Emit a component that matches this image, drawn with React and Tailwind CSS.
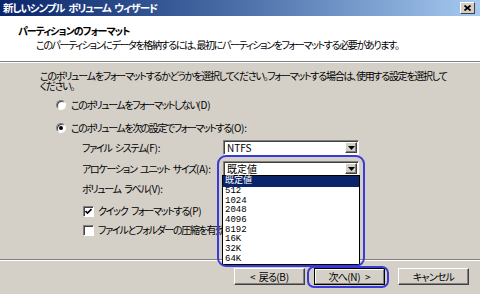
const Tri = () => (
  <svg width="7" height="4" viewBox="0 0 7 4"><path d="M0 0h7L3.5 4z" fill="#000" /></svg>
);

const K = ({ children }) => <span className="tracking-[-0.2px]">{children}</span>;

const DropBtn = () => (
  <div className="w-[12px] h-full flex items-center justify-center bg-[#d4d0c8] border border-t-white border-l-white border-b-[#404040] border-r-[#404040] shadow-[inset_-1px_-1px_#808080]">
    <Tri />
  </div>
);

const Combo = ({ value }) => (
  <div className="w-[136px] h-[15px] flex bg-white border border-t-[#808080] border-l-[#808080] border-b-white border-r-white shadow-[inset_1px_1px_#404040]">
    <div className="flex-1 pl-[3px] pt-[1px] flex items-center tracking-normal">{value}</div>
    <div className="p-[1px] h-full"><DropBtn /></div>
  </div>
);

const Radio = ({ checked }) => (
  <div className="w-[10px] h-[10px] rounded-full bg-white border border-t-[#808080] border-l-[#808080] border-b-white border-r-white flex items-center justify-center shadow-[inset_1px_1px_#404040]">
    {checked && <div className="w-[4px] h-[4px] rounded-full bg-black" />}
  </div>
);

const Check = ({ checked }) => (
  <div className="w-[11px] h-[11px] bg-white border border-t-[#808080] border-l-[#808080] border-b-white border-r-white flex items-center justify-center shadow-[inset_1px_1px_#404040]">
    {checked && (
      <svg width="7" height="7" viewBox="0 0 7 7"><path d="M0.5 3l2 2 4-4" stroke="#000" strokeWidth="1.6" fill="none" /></svg>
    )}
  </div>
);

const Button = ({ children, def }) => (
  <div className={`w-[71px] h-[17px] bg-[#d4d0c8] flex items-center justify-center border ${def ? 'border-black' : 'border-t-white border-l-white border-b-[#404040] border-r-[#404040]'}`}>
    <div className={`w-full h-full flex items-center justify-center tracking-[-0.8px] ${def ? 'border border-t-white border-l-white border-b-[#808080] border-r-[#808080]' : 'shadow-[inset_-1px_-1px_#808080]'}`}>
      {children}
    </div>
  </div>
);

export default function App() {
  const items = ['既定値', '512', '1024', '2048', '4096', '8192', '16K', '32K', '64K'];
  return (
    <div className="relative w-[480px] h-[294px] overflow-hidden bg-[#d4d0c8] text-black font-['Noto_Sans_CJK_JP',sans-serif] text-[10px] tracking-[-1.3px] [word-spacing:2.5px] leading-none [font-feature-settings:'palt'] flex flex-col whitespace-nowrap">
      {/* title bar */}
      <div className="h-[16px] flex items-center justify-between pl-[3px] pr-[5px] bg-gradient-to-r from-[#0a246a] via-[#4c6fa8] to-[#a6caf0]">
        <span className="text-white font-bold text-[10.5px] tracking-[-1.1px]">新しいシンプル ボリューム ウィザード</span>
        <div className="w-[15px] h-[12px] bg-[#d4d0c8] border border-t-white border-l-white border-b-[#404040] border-r-[#404040] flex items-center justify-center">
          <svg width="7" height="6" viewBox="0 0 7 6"><path d="M0.5 0.5l6 5M6.5 0.5l-6 5" stroke="#000" strokeWidth="1.7" /></svg>
        </div>
      </div>

      {/* header */}
      <div className="h-[45px] bg-white pl-[18px] pt-[10px]">
        <div className="font-bold h-[12px] tracking-[-1px]">パーティションのフォーマット</div>
        <div className="pl-[18px] mt-[2px] tracking-[-1.35px]">このパーティションにデータを格納するには、最初にパーティションをフォーマットする必要があります。</div>
      </div>
      <div className="h-px bg-[#808080]" />
      <div className="h-px bg-white" />

      {/* body */}
      <div className="flex-1 pl-[40px] pt-[8px] flex flex-col">
        <div className="leading-[10px] tracking-[-1.25px]">
          このボリュームをフォーマットするかどうかを選択してください。フォーマットする場合は、使用する設定を選択して
          <br />
          ください。
        </div>
        <div className="mt-[8px] pl-[16px] flex items-center gap-[5px] h-[12px]">
          <Radio />
          <span className="tracking-[-1.45px]">このボリュームをフォーマットしない<K>(D)</K></span>
        </div>
        <div className="mt-[11px] pl-[16px] flex items-center gap-[5px] h-[12px]">
          <Radio checked />
          <span className="tracking-[-1.45px]">このボリュームを次の設定でフォーマットする<K>(O):</K></span>
        </div>
        <div className="pl-[42px] flex flex-col">
          <div className="mt-[6px] flex items-center h-[15px]">
            <span className="w-[141px]">ファイル システム<K>(F):</K></span>
            <Combo value="NTFS" />
          </div>
          <div className="mt-[6px] flex items-center h-[15px]">
            <span className="w-[141px]">アロケーション ユニット サイズ<K>(A):</K></span>
            <Combo value="既定値" />
          </div>
          <div className="mt-[6px] flex items-center h-[14px]">
            <span>ボリューム ラベル<K>(V):</K></span>
          </div>
          <div className="mt-[9px] pl-[1px] flex items-center gap-[4px] h-[12px]">
            <Check checked />
            <span>クイック フォーマットする<K>(P)</K></span>
          </div>
          <div className="mt-[7px] pl-[1px] flex items-center gap-[4px] h-[12px]">
            <Check />
            <span>ファイルとフォルダーの圧縮を有効にする<K>(E)</K></span>
          </div>
        </div>
      </div>

      <div className="h-px bg-[#808080]" />
      <div className="h-px bg-white" />

      {/* buttons */}
      <div className="h-[33px] flex justify-end pt-[7px] pr-[11px]">
        <Button>&lt; 戻る<K>(B)</K></Button>
        <div className="w-[9px]" />
        <Button def>次へ<K>(N) &gt;</K></Button>
        <div className="w-[13px]" />
        <Button>キャンセル</Button>
      </div>

      {/* open dropdown list */}
      <div className="absolute left-[222px] top-[175px] w-[138px] h-[90px] bg-white border border-black font-['Liberation_Mono','Noto_Sans_CJK_JP',monospace] text-[9px] tracking-normal flex flex-col">
        {items.map((it, i) => (
          <div key={it} className={`h-[9.8px] flex items-center pl-[2px] ${i === 0 ? 'bg-[#0a246a] text-white h-[11px]' : ''}`}>
            {it}
          </div>
        ))}
      </div>

      {/* annotation rings */}
      <div className="absolute left-[217px] top-[155px] w-[148px] h-[112px] border-2 border-[#3a3ad8] rounded-[9px]" />
      <div className="absolute left-[307px] top-[266px] w-[82px] h-[22px] border-2 border-[#3a3ad8] rounded-[7px]" />
    </div>
  );
}
